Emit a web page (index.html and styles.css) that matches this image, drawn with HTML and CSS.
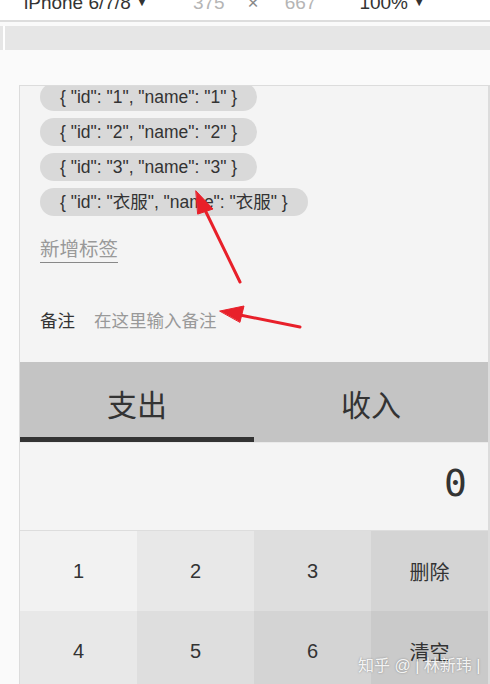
FILE: index.html
```html
<!DOCTYPE html>
<html lang="zh">
<head>
  <meta charset="UTF-8" />
  <meta name="viewport" content="width=device-width, initial-scale=1" />
  <title>记账</title>
  <link rel="stylesheet" href="styles.css">
</head>
<body>
  <!-- devtools toolbar -->
  <div class="devbar">
    <span class="device">iPhone 6/7/8 <i>▼</i></span>
    <span class="dim w">375</span>
    <span class="times">×</span>
    <span class="dim h">667</span>
    <span class="zoom">100% <i>▼</i></span>
  </div>
  <div class="ruler"><div class="ruler-cap"></div></div>

  <div class="stage">
    <div class="phone">
      <ul class="tags">
        <li>{ "id": "1", "name": "1" }</li>
        <li>{ "id": "2", "name": "2" }</li>
        <li>{ "id": "3", "name": "3" }</li>
        <li>{ "id": "衣服", "name": "衣服" }</li>
      </ul>
      <div class="new-tag"><span>新增标签</span></div>

      <label class="notes">
        <span class="notes-name">备注</span>
        <span class="notes-input">在这里输入备注</span>
      </label>

      <div class="tabs">
        <div class="tab selected">支出</div>
        <div class="tab">收入</div>
      </div>

      <div class="output">0</div>

      <div class="pad">
        <button class="k1">1</button>
        <button class="k2">2</button>
        <button class="k3">3</button>
        <button class="k4">删除</button>
        <button class="k2">4</button>
        <button class="k3">5</button>
        <button class="k4">6</button>
        <button class="k5">清空</button>
      </div>
    </div>
  </div>

  <!-- annotation arrows -->
  <svg class="arrows" width="490" height="684" viewBox="0 0 490 684">
    <g fill="#e8202a" stroke="#e8202a" stroke-linecap="round">
      <line x1="240" y1="282" x2="205" y2="210" stroke-width="3"/>
      <polygon points="196,191 213,209 198,214" stroke-width="1"/>
      <line x1="300" y1="327" x2="240" y2="315" stroke-width="3"/>
      <polygon points="220,311 244,306 240,322" stroke-width="1"/>
    </g>
  </svg>

  <div class="mark">知乎 @ | 林新玮 |</div>
</body>
</html>
```

FILE: styles.css
```css
* {
  box-sizing: border-box;
}

body {
  margin: 0;
  height: 684px;
  overflow: hidden;
  background: #fafafa;
  font-family: "Liberation Sans", "Noto Sans CJK SC", sans-serif;
  color: #333;
  position: relative;
}

/* devtools bar */
.devbar {
  height: 22px;
  background: #fff;
  border-bottom: 2px solid #ddd;
  display: flex;
  align-items: flex-end;
  padding: 0 0 8px 24px;
  font-size: 19px;
  line-height: 19px;
  overflow: hidden;
  white-space: nowrap;
}

.devbar i {
  font-style: normal;
  font-size: 12px;
  vertical-align: 3px;
}

.devbar .dim {
  color: #b5b5b5;
}

.devbar .w {
  margin-left: 45px;
}

.devbar .times {
  color: #888;
  margin: 0 26px 0 23px;
}

.devbar .zoom {
  margin-left: 43px;
}

.ruler {
  margin-top: 4px;
  height: 24px;
  background: #e6e6e6;
  display: flex;
}

.ruler-cap {
  width: 5px;
  border-right: 2px solid #fff;
}

.stage {
  padding: 35px 0 0 19px;
}

.phone {
  background: #f4f4f4;
  border: 1px solid #dcdcdc;
  border-right-width: 2px;
  height: 620px;
  overflow: hidden;
}

/* tags */
.tags {
  list-style: none;
  margin: -3px 0 0;
  padding: 0 20px;
  display: flex;
  flex-direction: column;
  align-items: flex-start;
  gap: 7px;
}

.tags li {
  background: #d9d9d9;
  height: 28px;
  line-height: 28px;
  border-radius: 14px;
  padding: 0 20px;
  font-size: 17.5px;
  color: #333;
}

.new-tag {
  padding: 21px 20px 0;
}

.new-tag span {
  display: inline-block;
  font-size: 19.5px;
  color: #999;
  line-height: 25px;
  border-bottom: 1px solid #888;
}

/* notes */
.notes {
  display: flex;
  gap: 19px;
  padding: 0 20px;
  margin-top: 47px;
  font-size: 17.5px;
  line-height: 22px;
}

.notes-input {
  color: #999;
}

/* tabs */
.tabs {
  margin-top: 30px;
  display: flex;
  background: #c4c4c4;
}

.tab {
  flex: 1;
  height: 80px;
  display: flex;
  align-items: center;
  justify-content: center;
  font-size: 30px;
  color: #333;
  padding-top: 2px;
}

.tab.selected {
  border-bottom: 5px solid #333;
  padding-top: 7px;
}

.output {
  height: 89px;
  border-top: 1px solid #eaeaea;
  border-bottom: 1px solid #ddd;
  background: #f4f4f4;
  font-family: "DejaVu Sans Mono", monospace;
  font-size: 38px;
  text-align: right;
  padding: 18px 21px 0 0;
}

/* number pad */
.pad {
  display: grid;
  grid-template-columns: repeat(4, 1fr);
  grid-auto-rows: 80px;
}

.pad button {
  border: none;
  font-family: "Liberation Sans", "Noto Sans CJK SC", sans-serif;
  font-size: 20px;
  color: #333;
  padding: 0;
}

.k1 { background: #f2f2f2; }
.k2 { background: #e8e8e8; }
.k3 { background: #dedede; }
.k4 { background: #d4d4d4; }
.k5 { background: #cacaca; }

/* overlays */
.arrows {
  position: absolute;
  left: 0;
  top: 0;
  pointer-events: none;
}

.mark {
  position: absolute;
  left: 358px;
  top: 652px;
  font-size: 16px;
  color: rgba(255, 255, 255, 0.9);
  text-shadow: 0 0 2px rgba(0, 0, 0, 0.35);
  white-space: nowrap;
}
```
